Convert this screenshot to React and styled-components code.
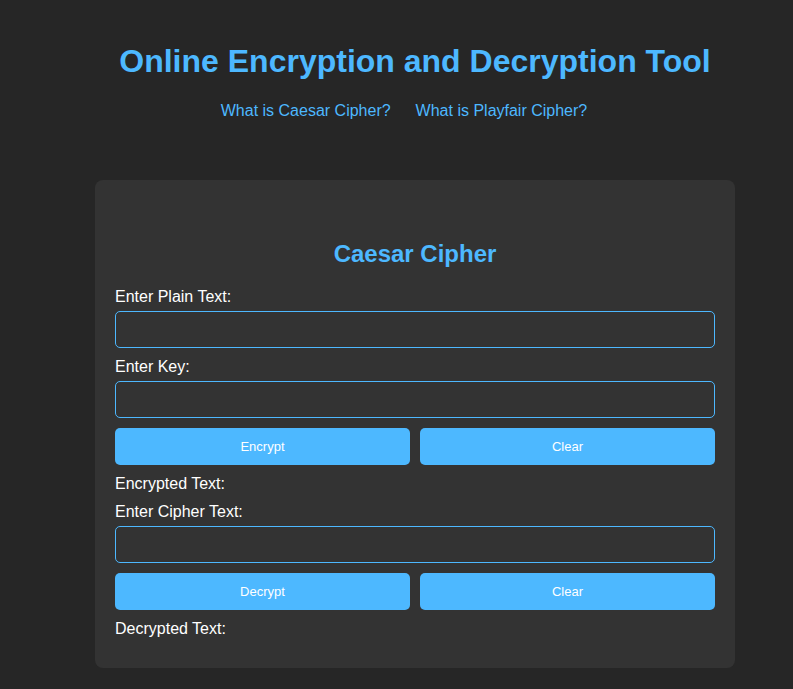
import styled, { createGlobalStyle } from 'styled-components';

const GlobalStyle = createGlobalStyle`
  html, body {
    margin: 0;
    padding: 0;
    background: #262626;
    font-family: 'Liberation Sans', Arial, sans-serif;
    color: #ffffff;
  }
  * {
    box-sizing: border-box;
  }
`;

const Page = styled.div`
  display: flex;
  flex-direction: column;
  align-items: center;
  padding: 43px 0 20px 37px;
  min-height: 689px;
`;

const Title = styled.h1`
  margin: 0;
  font-size: 32px;
  font-weight: 700;
  color: #4db8ff;
  text-align: center;
`;

const Nav = styled.nav`
  display: flex;
  margin-top: 22px;
  padding-right: 22px;
  gap: 25px;
`;

const NavLink = styled.a`
  font-size: 16px;
  color: #4db8ff;
  text-decoration: none;
  cursor: pointer;
`;

const Card = styled.section`
  width: 640px;
  margin-top: 60px;
  padding: 20px;
  background: #333333;
  border-radius: 8px;
  display: flex;
  flex-direction: column;
`;

const CardTitle = styled.h2`
  margin: 40px 0 18px;
  font-size: 24px;
  font-weight: 700;
  color: #4db8ff;
  text-align: center;
`;

const Label = styled.label`
  display: block;
  font-size: 16px;
  color: #ffffff;
  padding-top: 2px;
  margin-top: ${(p) => p.$top || 0}px;
  margin-bottom: 5px;
`;

const Output = styled.div`
  font-size: 16px;
  color: #ffffff;
  margin-top: 10px;
  margin-bottom: ${(p) => p.$bottom || 0}px;
`;

const Input = styled.input`
  width: 100%;
  height: 37px;
  padding: 8px 10px;
  background: #333333;
  border: 1px solid #4db8ff;
  border-radius: 5px;
  color: #ffffff;
  font-size: 14px;
  font-family: inherit;
  outline: none;
`;

const ButtonRow = styled.div`
  display: flex;
  gap: 10px;
  margin-top: 10px;
`;

const Button = styled.button`
  flex: 1;
  height: 37px;
  border: none;
  border-radius: 5px;
  background: #4db8ff;
  color: #ffffff;
  font-size: 13px;
  font-family: inherit;
  cursor: pointer;
`;

const App = () => {
  return (
    <>
      <GlobalStyle />
      <Page>
        <Title>Online Encryption and Decryption Tool</Title>
        <Nav>
          <NavLink>What is Caesar Cipher?</NavLink>
          <NavLink>What is Playfair Cipher?</NavLink>
        </Nav>
        <Card>
          <CardTitle>Caesar Cipher</CardTitle>
          <Label>Enter Plain Text:</Label>
          <Input type="text" />
          <Label $top={8}>Enter Key:</Label>
          <Input type="text" />
          <ButtonRow>
            <Button>Encrypt</Button>
            <Button>Clear</Button>
          </ButtonRow>
          <Output>Encrypted Text:</Output>
          <Label $top={8}>Enter Cipher Text:</Label>
          <Input type="text" />
          <ButtonRow>
            <Button>Decrypt</Button>
            <Button>Clear</Button>
          </ButtonRow>
          <Output $bottom={10}>Decrypted Text:</Output>
        </Card>
      </Page>
    </>
  );
};

export default App;
